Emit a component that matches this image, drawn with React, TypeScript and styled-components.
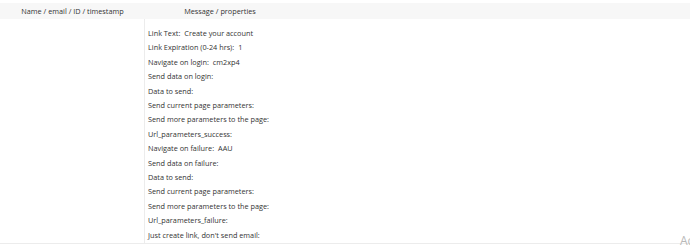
import styled, { createGlobalStyle } from "styled-components";

const GlobalStyle = createGlobalStyle`
  html, body {
    margin: 0;
    padding: 0;
    background: #ffffff;
    overflow: hidden;
  }
  body {
    font-family: "Open Sans", "Liberation Sans", sans-serif;
  }
`;

const rows: [string, string][] = [
  ["Link Text", "Create your account"],
  ["Link Expiration (0-24 hrs)", "1"],
  ["Navigate on login", "cm2xp4"],
  ["Send data on login", ""],
  ["Data to send", ""],
  ["Send current page parameters", ""],
  ["Send more parameters to the page", ""],
  ["Url_parameters_success", ""],
  ["Navigate on failure", "AAU"],
  ["Send data on failure", ""],
  ["Data to send", ""],
  ["Send current page parameters", ""],
  ["Send more parameters to the page", ""],
  ["Url_parameters_failure", ""],
  ["Just create link, don't send email", ""],
];

export default function App() {
  return (
    <Page>
      <GlobalStyle />
      <Table>
        <HeadRow>
          <HeadCell $width={145}>Name / email / ID / timestamp</HeadCell>
          <HeadCell $width={150}>Message / properties</HeadCell>
          <HeadCell />
        </HeadRow>
        <BodyRow>
          <NameCell />
          <PropsCell>
            {rows.map(([label, value], i) => (
              <Prop key={i}>
                {label}:{value && <Value>{value}</Value>}
              </Prop>
            ))}
          </PropsCell>
          <Rest />
        </BodyRow>
      </Table>
      <Watermark>Ac</Watermark>
    </Page>
  );
}

const Page = styled.div`
  position: relative;
  width: 690px;
  height: 245px;
  padding-top: 3px;
  box-sizing: border-box;
  overflow: hidden;
`;

const Table = styled.div`
  width: 690px;
  border-bottom: 1px solid #ececec;
`;

const HeadRow = styled.div`
  display: flex;
  height: 16px;
  background: #f7f7f7;
`;

const HeadCell = styled.div<{ $width?: number }>`
  flex: ${(p) => (p.$width ? `0 0 ${p.$width}px` : "1")};
  text-align: center;
  font-size: 7.3px;
  line-height: 16px;
  color: #333333;
`;

const BodyRow = styled.div`
  display: flex;
  height: 224px;
`;

const NameCell = styled.div`
  flex: 0 0 145px;
  border-right: 1px solid #ececec;
  box-sizing: border-box;
`;

const PropsCell = styled.div`
  flex: 0 0 150px;
  padding: 7px 0 0 3px;
  box-sizing: border-box;
  white-space: nowrap;
`;

const Rest = styled.div`
  flex: 1;
`;

const Prop = styled.div`
  font-size: 7.3px;
  line-height: 14.4px;
  color: #333333;
`;

const Value = styled.span`
  margin-left: 4px;
`;

const Watermark = styled.div`
  position: absolute;
  left: 680px;
  top: 232px;
  font-size: 12px;
  color: #b8b8b8;
  white-space: nowrap;
`;
